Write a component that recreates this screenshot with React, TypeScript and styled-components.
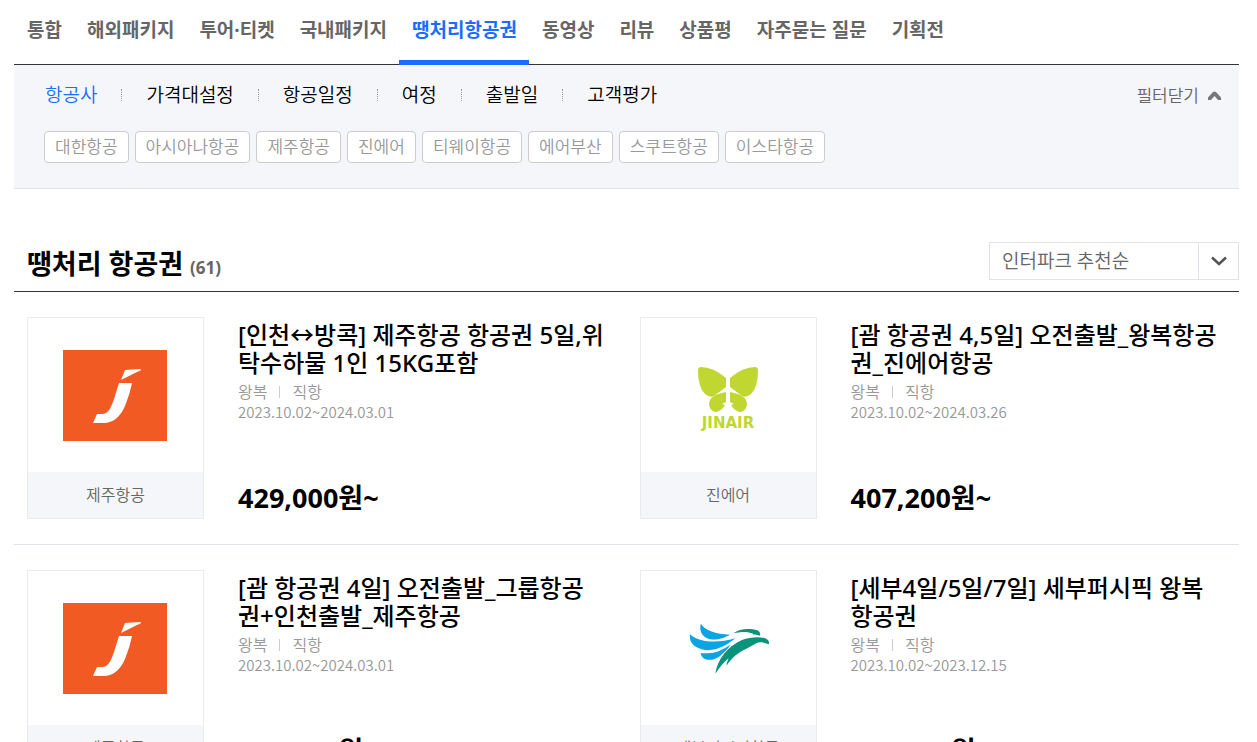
import React from 'react';
import styled, { createGlobalStyle } from 'styled-components';

const GlobalStyle = createGlobalStyle`
  *, *::before, *::after { box-sizing: border-box; }
  body {
    margin: 0;
    background: #fff;
    color: #000;
    font-family: "Noto Sans", "Noto Sans CJK KR", sans-serif;
  }
  button, select { font-family: inherit; }
  h2, h3, p, ul { margin: 0; padding: 0; }
  ul { list-style: none; }
  a { color: inherit; text-decoration: none; }
`;

const Page = styled.main`
  margin: 0 18px 0 14px;
`;

const TabBar = styled.nav`
  display: flex;
  height: 65px;
  border-bottom: 1px solid #333;
`;

const Tab = styled.a<{ $active?: boolean }>`
  height: 65px;
  padding: 0 12px 0 13px;
  border-bottom: 5px solid ${(p) => (p.$active ? '#1a6dff' : 'transparent')};
  color: ${(p) => (p.$active ? '#1a6dff' : '#666')};
  font-size: 19px;
  font-weight: 700;
  line-height: 60px;
  white-space: nowrap;
`;

const FilterPanel = styled.section`
  display: flex;
  justify-content: space-between;
  align-items: flex-start;
  min-height: 124px;
  padding: 16px 18px 25px 30px;
  border-bottom: 1px solid #dfe4eb;
  background: #f5f6fa;
`;

const FilterGroups = styled.ul`
  display: flex;
  align-items: center;
  padding-left: 1px;
`;

const FilterGroup = styled.li`
  display: flex;
  align-items: center;

  & + &::before {
    content: '';
    height: 12px;
    margin: 0 24px;
    border-left: 1px dotted #999;
  }
`;

const FilterTab = styled.button<{ $active?: boolean }>`
  padding: 0;
  border: 0;
  background: none;
  color: ${(p) => (p.$active ? '#1a6dff' : '#000')};
  font-size: 19px;
  font-weight: 350;
  line-height: 28px;
`;

const Chips = styled.div`
  display: flex;
  flex-wrap: wrap;
  gap: 6px;
  margin-top: 22px;
`;

const Chip = styled.button`
  height: 32px;
  padding: 0 10px;
  border: 1px solid #ccc;
  border-radius: 4px;
  background: #fff;
  color: #999;
  font-size: 17px;
  font-weight: 350;
  line-height: 30px;
`;

const FilterToggle = styled.button`
  display: flex;
  align-items: center;
  gap: 9px;
  padding: 0;
  border: 0;
  background: none;
  color: #666;
  font-size: 17px;
  font-weight: 350;
  line-height: 30px;
`;

const ListHeader = styled.header`
  display: flex;
  justify-content: space-between;
  align-items: flex-end;
  margin-top: 53px;
  padding: 0 0 11px 13px;
  border-bottom: 1px solid #333;
`;

const ListTitle = styled.h2`
  font-size: 27px;
  font-weight: 700;
  line-height: 24px;
`;

const Count = styled.span`
  color: #666;
  font-size: 17px;
`;

const SortBox = styled.div`
  display: grid;
  grid-template-columns: 1fr 40px;
  width: 250px;
  height: 38px;
  border: 1px solid #dfe4eb;
`;

const SortSelect = styled.select`
  grid-area: 1 / 1 / 2 / 3;
  width: 100%;
  padding: 0 52px 1px 12px;
  border: 0;
  background: none;
  color: #666;
  font-size: 19px;
  font-weight: 350;
  appearance: none;
`;

const SortArrow = styled.span`
  display: grid;
  grid-area: 1 / 2 / 2 / 3;
  place-items: center;
  border-left: 1px solid #dfe4eb;
  pointer-events: none;
`;

const Results = styled.ul`
  display: grid;
  grid-template-columns: 1fr 1fr;
`;

const Card = styled.li`
  display: grid;
  grid-template-columns: 177px 1fr;
  gap: 34px;
  padding: 25px 13px;
  border-bottom: 1px solid #dfe4eb;
`;

const Carrier = styled.div`
  display: flex;
  flex-direction: column;
  height: 202px;
  border: 1px solid #e9ebee;
`;

const LogoArea = styled.div`
  display: grid;
  flex: 1;
  place-items: center;
  padding-right: 1px;
`;

const CarrierName = styled.p`
  background: #f5f6fa;
  color: #666;
  font-size: 16px;
  font-weight: 350;
  line-height: 46px;
  text-align: center;
`;

const Info = styled.div`
  display: flex;
  flex-direction: column;
  padding: 4px 0 7px;
`;

const Title = styled.h3`
  margin-bottom: 5px;
  font-size: 24px;
  font-weight: 500;
  line-height: 28px;
  white-space: pre-line;
`;

const Meta = styled.p`
  display: flex;
  align-items: center;
  color: #999;
  font-size: 16px;
  font-weight: 350;
  line-height: 20px;

  span + span::before {
    content: '';
    display: inline-block;
    height: 12px;
    margin: 0 12px;
    border-left: 1px solid #ccc;
  }
`;

const Period = styled.p`
  color: #999;
  font-family: "Noto Sans CJK KR", sans-serif;
  font-size: 15px;
  font-weight: 350;
  line-height: 20px;
`;

const Price = styled.p`
  margin-top: auto;
  font-size: 27px;
  font-weight: 700;
  line-height: 28px;
`;

const JinWordmark = styled.text`
  font-family: "DejaVu Sans", sans-serif;
  font-size: 15px;
  font-weight: 700;
`;

const JejuLogo = () => (
  <svg width="104" height="91" viewBox="0 0 104 91" role="img" aria-label="제주항공">
    <rect width="104" height="91" fill="#f15a22" />
    <path d="M62 20 77 19Q80 20 74 22L58 30Z" fill="#fff" />
    <path d="M56 33H69Q67 44 62 56Q55 72 42 73H30L34 64H39C46 64 48 57 51 49Z" fill="#fff" />
  </svg>
);

const JinLogo = () => (
  <svg width="104" height="91" viewBox="0 0 104 91" role="img" aria-label="진에어">
    <g fill="#bfd730">
      <path d="M25 17Q37 17 50 28V37L38 46Q34 48 29 44Q22 37 22 20Q22 17 25 17Z" />
      <path d="M79 17Q67 17 54 28V37L66 46Q70 48 75 44Q82 37 82 20Q82 17 79 17Z" />
      <path d="M50 42V52L46 54L49 55Q45 62 39 62Q33 60 33 53Q34 47 42 44Z" />
      <path d="M54 42V52L58 54L55 55Q59 62 65 62Q71 60 71 53Q70 47 62 44Z" />
      <JinWordmark x="52" y="78" textAnchor="middle">JINAIR</JinWordmark>
    </g>
  </svg>
);

const CebuLogo = () => (
  <svg width="104" height="91" viewBox="0 0 312 273" role="img" aria-label="세부퍼시픽항공">
    <g fill="#0aa5e2">
      <path d="M74 62C68 90 84 105 104 109C122 112 146 104 162 95C118 93 88 82 74 62Z" />
      <path d="M42 94C38 122 58 136 88 141C120 145 150 128 178 106C142 116 112 118 84 113C64 109 50 103 42 94Z" />
      <path d="M74 150C76 170 98 174 116 168C138 160 154 138 166 124C138 142 116 152 92 151C84 151 78 151 74 150Z" />
    </g>
    <g fill="#0a937b">
      <path d="M172 91C190 76 222 75 244 82C252 86 254 92 252 98C244 96 236 93 230 95C236 91 220 88 204 87C194 87 182 89 172 91Z" />
      <path d="M118 212C124 170 154 130 198 111C224 101 258 100 272 108C280 113 280 120 278 124C266 118 250 116 242 120C216 138 180 144 152 188C152 180 154 174 158 166C142 178 132 192 118 212Z" />
    </g>
  </svg>
);

const tabs = ['통합', '해외패키지', '투어·티켓', '국내패키지', '땡처리항공권', '동영상', '리뷰', '상품평', '자주묻는 질문', '기획전'];
const groups = ['항공사', '가격대설정', '항공일정', '여정', '출발일', '고객평가'];
const airlines = ['대한항공', '아시아나항공', '제주항공', '진에어', '티웨이항공', '에어부산', '스쿠트항공', '이스타항공'];

const flights = [
  { carrier: '제주항공', Logo: JejuLogo, title: '[인천↔방콕] 제주항공 항공권 5일,위\n탁수하물 1인 15KG포함', period: '2023.10.02~2024.03.01', price: '429,000' },
  { carrier: '진에어', Logo: JinLogo, title: '[괌 항공권 4,5일] 오전출발_왕복항공\n권_진에어항공', period: '2023.10.02~2024.03.26', price: '407,200' },
  { carrier: '제주항공', Logo: JejuLogo, title: '[괌 항공권 4일] 오전출발_그룹항공\n권+인천출발_제주항공', period: '2023.10.02~2024.03.01', price: '299,000' },
  { carrier: '세부퍼시픽항공', Logo: CebuLogo, title: '[세부4일/5일/7일] 세부퍼시픽 왕복\n항공권', period: '2023.10.02~2023.12.15', price: '299,000' },
];

export default function App() {
  return (
    <>
      <GlobalStyle />
      <Page>
        <TabBar>
          {tabs.map((tab) => (
            <Tab key={tab} href="#" $active={tab === '땡처리항공권'}>{tab}</Tab>
          ))}
        </TabBar>

        <FilterPanel>
          <div>
            <FilterGroups>
              {groups.map((group, i) => (
                <FilterGroup key={group}>
                  <FilterTab type="button" $active={i === 0}>{group}</FilterTab>
                </FilterGroup>
              ))}
            </FilterGroups>
            <Chips>
              {airlines.map((airline) => (
                <Chip key={airline} type="button">{airline}</Chip>
              ))}
            </Chips>
          </div>
          <FilterToggle type="button">
            필터닫기
            <svg width="13" height="10" viewBox="0 0 13 10" aria-hidden="true">
              <path d="M0 6.500 5 1Q6.500 0 8 1L13 6.500V9H10L6.500 5 3 9H0Z" fill="#777" />
            </svg>
          </FilterToggle>
        </FilterPanel>

        <ListHeader>
          <ListTitle>
            땡처리 항공권 <Count>(61)</Count>
          </ListTitle>
          <SortBox>
            <SortSelect aria-label="정렬">
              <option>인터파크 추천순</option>
            </SortSelect>
            <SortArrow>
              <svg width="16" height="10" viewBox="0 0 16 10" aria-hidden="true">
                <path d="M1 1.500 8 8 15 1.500" fill="none" stroke="#555" strokeWidth="2.500" />
              </svg>
            </SortArrow>
          </SortBox>
        </ListHeader>

        <Results>
          {flights.map(({ carrier, Logo, title, period, price }) => (
            <Card key={title}>
              <Carrier>
                <LogoArea><Logo /></LogoArea>
                <CarrierName>{carrier}</CarrierName>
              </Carrier>
              <Info>
                <Title><a href="#">{title}</a></Title>
                <Meta><span>왕복</span><span>직항</span></Meta>
                <Period>{period}</Period>
                <Price>{price}원~</Price>
              </Info>
            </Card>
          ))}
        </Results>
      </Page>
    </>
  );
}
